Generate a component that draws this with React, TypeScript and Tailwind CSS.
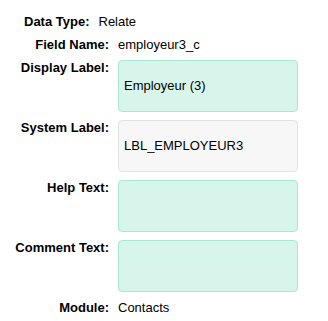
const rows = [
  { label: "Display Label:", value: "Employeur (3)", readOnly: false },
  { label: "System Label:", value: "LBL_EMPLOYEUR3", readOnly: true },
  { label: "Help Text:", value: "", readOnly: false },
  { label: "Comment Text:", value: "", readOnly: false },
];

function BoxRow({ label, value, readOnly }: { label: string; value: string; readOnly: boolean }) {
  return (
    <div className="flex gap-[9px]">
      <div className="w-[109px] text-right font-bold leading-4">{label}</div>
      <div
        className={
          readOnly
            ? "w-[180px] h-[52px] rounded-[4px] border border-[#e2e4e4] bg-[#f7f7f7] px-[5px] flex items-center"
            : "w-[180px] h-[52px] rounded-[4px] border border-[#a6e8d2] bg-[#d8f5ec] px-[5px] flex items-center"
        }
      >
        {value}
      </div>
    </div>
  );
}

export default function App() {
  return (
    <div
      className="w-[328px] h-[321px] bg-white text-[13px] text-black pt-[10px]"
      style={{ fontFamily: '"Liberation Sans", Arial, sans-serif' }}
    >
      <div className="flex gap-[9px] pl-[24px] h-[23px] items-center">
        <span className="font-bold">Data Type:</span>
        <span>Relate</span>
      </div>
      <div className="flex gap-[9px] h-[23px] items-center">
        <div className="w-[109px] text-right font-bold">Field Name:</div>
        <div>employeur3_c</div>
      </div>
      <div className="flex flex-col gap-[8px] mt-[4px]">
        {rows.map((r) => (
          <BoxRow key={r.label} {...r} />
        ))}
      </div>
      <div className="flex gap-[9px] h-[23px] items-center mt-[4px]">
        <div className="w-[109px] text-right font-bold">Module:</div>
        <div>Contacts</div>
      </div>
    </div>
  );
}
